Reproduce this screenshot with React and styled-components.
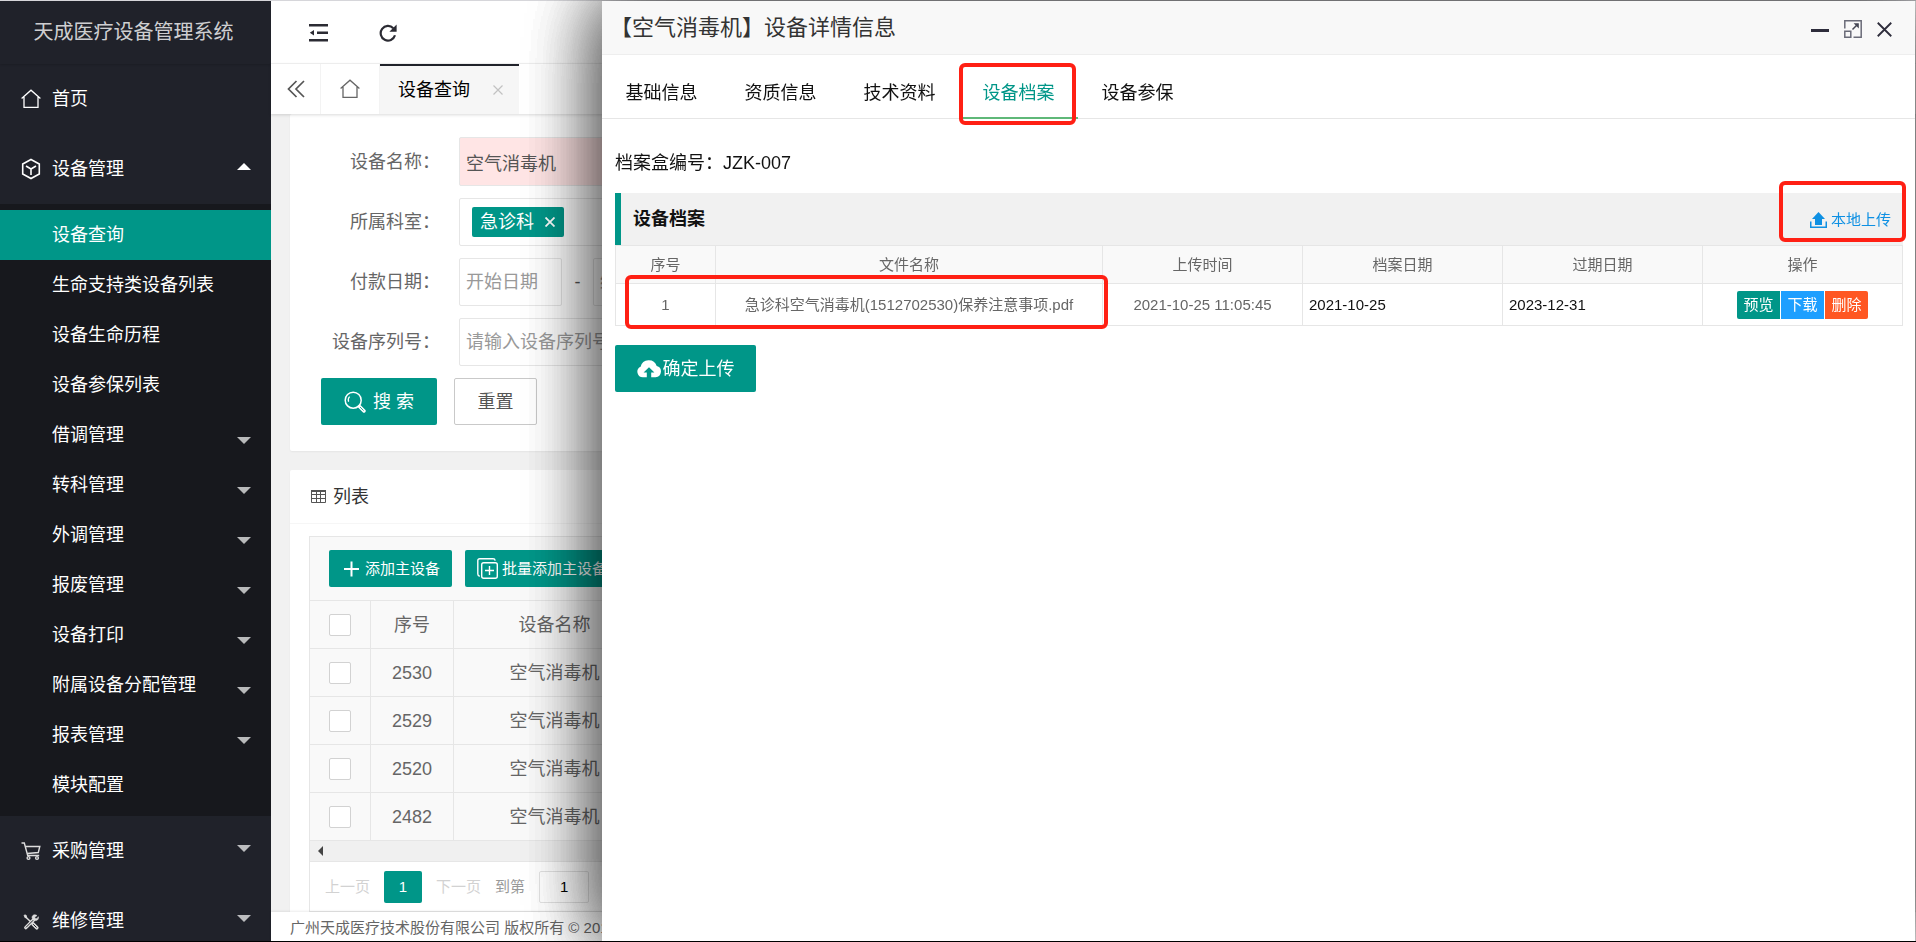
import React from 'react';
import styled, { createGlobalStyle } from 'styled-components';

const GlobalStyle = createGlobalStyle`
  * {
    box-sizing: border-box;
  }

  body {
    margin: 0;
    overflow: hidden;
  }

  body, button, input {
    font-family: "Liberation Sans", "Noto Sans CJK SC", sans-serif;
    font-size: 18px;
    line-height: 24px;
  }

  button {
    margin: 0;
    padding: 0;
    border: 0;
    background: none;
    color: inherit;
    cursor: pointer;
  }

  a {
    color: inherit;
    text-decoration: none;
  }

  svg {
    display: block;
    flex: none;
  }
`;

const Page = styled.div`
  display: flex;
  height: 100vh;
  border-top: 1px solid #d6d6da;
  border-bottom: 1px solid #000;
  background: #f1f1f1;
  overflow: hidden;
`;

/* sidebar */

const Sidebar = styled.aside`
  flex: none;
  width: 271px;
  background: #20222a;
  color: #fff;
  overflow: hidden;
`;

const Brand = styled.h1`
  margin: 0;
  height: 63px;
  padding-right: 4px;
  box-shadow: 0 1px 2px rgba(0, 0, 0, 0.15);
  color: rgba(255, 255, 255, 0.8);
  font-size: 20px;
  font-weight: 400;
  line-height: 63px;
  text-align: center;
`;

const MenuLink = styled.a`
  display: flex;
  align-items: center;
  gap: 11px;
  height: 70px;
  padding: 0 20px 0 21px;
`;

const MenuText = styled.span`
  flex: 1;
`;

const SubMenu = styled.nav`
  padding: 6px 0;
  background: #17181d;
`;

const SubLink = styled.a`
  display: flex;
  align-items: center;
  justify-content: space-between;
  height: 50px;
  padding: 0 20px 0 52px;
  background: ${props => (props.$active ? '#009688' : 'transparent')};
`;

const Caret = styled.span`
  border: 7px solid transparent;
  border-bottom-width: 0;
  border-top-color: rgba(255, 255, 255, 0.7);
  margin-top: ${props => (props.$sub ? '11px' : '0')};
  margin-bottom: ${props => (props.$sub ? '0' : '6px')};
`;

const CaretUp = styled.span`
  border: 7px solid transparent;
  border-top-width: 0;
  border-bottom-color: #fff;
  margin-bottom: 6px;
`;

/* main column */

const Main = styled.div`
  display: flex;
  flex: 1;
  flex-direction: column;
  min-width: 0;
`;

const Header = styled.header`
  display: flex;
  flex: none;
  align-items: center;
  gap: 51px;
  height: 63px;
  padding: 1px 38px 0;
  border-bottom: 1px solid #f3f3f3;
  background: #fff;
`;

const TabBar = styled.div`
  position: relative;
  display: flex;
  flex: none;
  height: 50px;
  background: #fff;
  box-shadow: 0 1px 3px rgba(0, 0, 0, 0.15);
`;

const TabButton = styled.button`
  display: flex;
  align-items: center;
  justify-content: center;
  width: ${props => props.$width};
  border-right: 1px solid #f3f3f3;
`;

const ActiveTab = styled.div`
  display: flex;
  align-items: center;
  gap: 23px;
  padding: 0 16px 0 18px;
  border-top: 2px solid #20222a;
  background: #f6f6f6;
  color: #000;
`;

const Content = styled.main`
  display: flex;
  flex: 1;
  flex-direction: column;
  gap: 19px;
  min-height: 0;
  padding: 0 19px;
  overflow: hidden;
`;

const Card = styled.section`
  flex: none;
  border-radius: 2px;
  background: #fff;
  box-shadow: 0 1px 2px rgba(0, 0, 0, 0.05);
`;

const SearchForm = styled.form`
  display: flex;
  flex-direction: column;
  gap: 12px;
  padding: 23px 19px 26px;
`;

const Field = styled.div`
  display: flex;
  align-items: center;
`;

const Label = styled.label`
  flex: none;
  width: 150px;
  padding-right: 19px;
  color: #666;
  text-align: right;
`;

const TextInput = styled.input`
  width: ${props => props.$width || '237px'};
  height: ${props => (props.$invalid ? '49px' : '48px')};
  padding: 0 6px;
  border: 1px solid #e6e6e6;
  border-radius: 2px;
  background: ${props => (props.$invalid ? '#ffe5e5' : '#fff')};
  color: #555;

  &::placeholder {
    color: #999;
    opacity: 1;
  }
`;

const Dash = styled.span`
  width: 31px;
  color: #555;
  text-align: center;
`;

const TagBox = styled.div`
  display: flex;
  align-items: center;
  width: 237px;
  height: 48px;
  padding: 0 12px;
  border: 1px solid #e6e6e6;
  border-radius: 2px;
`;

const Tag = styled.span`
  display: flex;
  align-items: center;
  gap: 11px;
  height: 30px;
  padding: 0 9px 0 8px;
  border-radius: 2px;
  background: #009688;
  color: #fff;
`;

const FormActions = styled.div`
  display: flex;
  gap: 17px;
  padding-left: 12px;
`;

const PrimaryButton = styled.button`
  display: flex;
  align-items: center;
  justify-content: center;
  gap: ${props => props.$gap || '7px'};
  width: ${props => props.$width};
  height: 47px;
  border-radius: 2px;
  background: #009688;
  color: #fff;
`;

const ResetButton = styled.button`
  width: 83px;
  height: 47px;
  border: 1px solid #c9c9c9;
  border-radius: 2px;
  color: #555;
`;

const CardTitle = styled.h2`
  display: flex;
  align-items: center;
  gap: 7px;
  margin: 0;
  height: 54px;
  padding: 0 21px;
  border-bottom: 1px solid #f6f6f6;
  color: #333;
  font-size: 18px;
  font-weight: 400;
`;

const ListBox = styled.div`
  margin: 12px 19px;
  border: 1px solid #e6e6e6;
`;

const Toolbar = styled.div`
  display: flex;
  gap: 13px;
  padding: 13px 19px;
  background: #f9f9f9;
`;

const ToolButton = styled.button`
  display: flex;
  align-items: center;
  gap: 4px;
  height: 37px;
  padding: 0 12px;
  border-radius: 2px;
  background: #009688;
  color: #fff;
  font-size: 15px;
`;

const ListTable = styled.table`
  width: 100%;
  border-collapse: separate;
  border-spacing: 0;
  table-layout: fixed;
  background: #f9f9f9;
  color: #666;

  th, td {
    height: 48px;
    padding: 0;
    border: 1px solid #e6e6e6;
    border-left: 0;
    border-bottom: 0;
    font-weight: 400;
    text-align: center;
  }
`;

const CheckBox = styled.input`
  display: block;
  width: 22px;
  height: 22px;
  margin: 0 auto;
  border: 1px solid #d2d2d2;
  border-radius: 2px;
  background: #fff;
  appearance: none;
`;

const ScrollTrack = styled.div`
  display: flex;
  align-items: center;
  height: 21px;
  padding-left: 8px;
  border-top: 1px solid #e6e6e6;
  background: #f0f0f0;
`;

const ScrollArrow = styled.span`
  border: 5px solid transparent;
  border-right-color: #444;
  border-left-width: 0;
`;

const Pager = styled.div`
  display: flex;
  align-items: center;
  gap: 14px;
  height: 50px;
  padding-left: 15px;
  border-top: 1px solid #e6e6e6;
  background: #fff;
  color: #999;
  font-size: 15px;
`;

const PageStep = styled.button`
  color: #d2d2d2;
  font-size: 15px;
`;

const PageCurrent = styled.button`
  width: 38px;
  height: 32px;
  border-radius: 2px;
  background: #009688;
  color: #fff;
  font-size: 15px;
`;

const PageInput = styled.input`
  width: 50px;
  height: 32px;
  border: 1px solid #e2e2e2;
  border-radius: 2px;
  font-size: 15px;
  text-align: center;
`;

const Footer = styled.footer`
  position: relative;
  flex: none;
  height: 29px;
  padding: 0 19px;
  background: #fff;
  box-shadow: 0 -1px 2px rgba(0, 0, 0, 0.08);
  color: #666;
  font-size: 15px;
  line-height: 32px;
`;

/* detail window, floats over the page */

const Dialog = styled.div`
  position: fixed;
  top: 1px;
  right: 1px;
  bottom: 1px;
  left: 602px;
  background: #fff;
  box-shadow:
    0 0 72px rgba(0, 0, 0, 0.3),
    0 0 72px rgba(0, 0, 0, 0.3),
    0 0 72px rgba(0, 0, 0, 0.3),
    0 0 72px rgba(0, 0, 0, 0.3);
  color: #111;
`;

const DialogHeader = styled.header`
  display: flex;
  align-items: center;
  justify-content: space-between;
  height: 54px;
  padding: 0 23px 0 8px;
  border-bottom: 1px solid #eee;
  background: #f8f8f8;
`;

const DialogTitle = styled.h2`
  margin: 0;
  color: #333;
  font-size: 22px;
  font-weight: 400;
  line-height: 30px;
`;

const WindowButtons = styled.div`
  display: flex;
  align-items: center;
  gap: 15px;
  padding-top: 3px;
`;

const DialogTabs = styled.div`
  display: flex;
  height: 64px;
  border-bottom: 1px solid #e6e6e6;
`;

const DialogTab = styled.button`
  position: relative;
  width: 119px;
  height: 64px;
  padding-top: 14px;
  border-bottom: 2px solid ${props => (props.$active ? '#5fb878' : 'transparent')};
  color: ${props => (props.$active ? '#009688' : '#111')};
`;

const Mark = styled.span`
  position: absolute;
  top: ${props => props.$top};
  right: ${props => props.$right};
  bottom: ${props => props.$bottom};
  left: ${props => props.$left};
  border: 4px solid #ff2014;
  border-radius: 6px;
  pointer-events: none;
`;

const DialogBody = styled.div`
  padding: 32px 12px 32px 13px;
`;

const BoxNumber = styled.p`
  margin: 0 0 18px;
`;

const SectionBar = styled.div`
  position: relative;
  display: flex;
  align-items: center;
  justify-content: space-between;
  height: 52px;
  padding: 0 12px;
  border-left: 6px solid #009688;
  background: #f1f1f1;
`;

const SectionTitle = styled.h3`
  margin: 0;
  font-size: 18px;
  font-weight: 700;
`;

const UploadButton = styled.button`
  display: flex;
  align-items: center;
  gap: 4px;
  padding-top: 2px;
  color: #0e90e3;
  font-size: 15px;
`;

const FileTableWrap = styled.div`
  position: relative;
  margin-bottom: 19px;
`;

const FileTable = styled.table`
  width: 100%;
  border-collapse: collapse;
  table-layout: fixed;
  color: #666;
  font-size: 15px;

  th, td {
    padding: 0 6px;
    border: 1px solid #e6e6e6;
    font-weight: 400;
    text-align: center;
  }

  th {
    height: 38px;
    background: #f9f9f9;
  }

  td {
    height: 42px;
  }
`;

const DateCell = styled.td`
  && {
    color: #111;
    text-align: left;
  }
`;

const RowActions = styled.div`
  display: flex;
  justify-content: center;
  gap: 1px;
`;

const RowButton = styled.button`
  width: 43px;
  height: 28px;
  border-radius: ${props => props.$radius || '0'};
  background: ${props => props.$color};
  color: #fff;
  font-size: 15px;
`;

/* icons */

const HomeIcon = ({ color }) => (
  <svg width="20" height="20" viewBox="0 0 20 20" fill="none" stroke={color} strokeWidth="1.3">
    <path d="M0.6 9.6 10 1.2l9.4 8.4M3 8v10.3h14V8" />
  </svg>
);

const CubeIcon = () => (
  <svg width="20" height="22" viewBox="0 0 20 22" fill="none" stroke="#fff" strokeWidth="1.6">
    <path d="M10 1.5 18.3 6v10L10 20.5 1.7 16V6zM5 8l5 3 5-3M10 11v6" />
  </svg>
);

const CartIcon = () => (
  <svg width="20" height="20" viewBox="0 0 20 20" fill="none" stroke="#ddd" strokeWidth="1.4">
    <path d="M0.5 2h2.8l3.4 12.5h11.5M4.5 5.5h14.3l-1.5 6-11 1" />
    <circle cx="7.5" cy="17" r="1.4" />
    <circle cx="16" cy="17" r="1.4" />
  </svg>
);

const ToolsIcon = () => (
  <svg width="20" height="20" viewBox="0 0 20 20" fill="none" stroke="#ddd">
    <path d="M4 5.5 10 11" strokeWidth="1.6" />
    <path d="m3 4.2 2-.2.8 2.5-1.7.2z" fill="#ddd" strokeWidth="0.8" />
    <path d="m12 13 3.8 3.8" strokeWidth="3.6" strokeLinecap="round" />
    <path d="m12.2 13.2 3.4 3.4" stroke="#20222a" strokeWidth="1" />
    <path d="m4.8 16.6 7.6-7.6" strokeWidth="3.4" strokeLinecap="round" />
    <path d="m5 16.4 7.2-7.2" stroke="#20222a" strokeWidth="1" />
    <path d="M16 4.6 13.7 6l.5 1.4 1.9.3 1.2-2c.7 2.6-1.3 4.6-4.2 3.7l-2-2.2c-.5-2.5 2-4.6 4.9-2.6z" fill="#ddd" strokeWidth="0.6" />
  </svg>
);

const CollapseIcon = () => (
  <svg width="19" height="18" viewBox="0 0 19 18" fill="#2b2b33">
    <path d="M0 0h19v2.4H0zM8 7.6h11V10H8zM0 15h19v2.4H0zM.8 8.8 5 6v5.6z" />
  </svg>
);

const RefreshIcon = () => (
  <svg width="18" height="18" viewBox="0 0 18 18">
    <path d="M14.3 4.2A7.3 7.3 0 1 0 16 11.3" fill="none" stroke="#2b2b33" strokeWidth="2.2" />
    <path d="M17.6 0.6v7.2h-7.2z" fill="#2b2b33" />
  </svg>
);

const DoubleLeftIcon = () => (
  <svg width="18" height="18" viewBox="0 0 18 18" fill="none" stroke="#555" strokeWidth="1.7">
    <path d="M9.5 1 1.5 9l8 8M17 1 9 9l8 8" />
  </svg>
);

const CrossIcon = ({ size, color, weight }) => (
  <svg width={size} height={size} viewBox="0 0 10 10" stroke={color} strokeWidth={weight}>
    <path d="m.5.5 9 9M9.5.5l-9 9" />
  </svg>
);

const SearchIcon = () => (
  <svg width="22" height="22" viewBox="0 0 22 22" fill="none" stroke="#fff">
    <circle cx="9.2" cy="9.2" r="8" strokeWidth="1.5" />
    <path d="M4.6 10.8a5 5 0 0 1 1-5.2" strokeWidth="1.2" />
    <path d="m15.5 15.5 4.5 4.5" strokeWidth="3.4" strokeLinecap="round" />
    <path d="m16 16 3.6 3.6" stroke="#009688" strokeWidth="0.8" />
  </svg>
);

const GridIcon = () => (
  <svg width="15" height="13" viewBox="0 0 15 13" fill="none" stroke="#555">
    <path d="M.5.5h14v12H.5zM.5 4.5h14M.5 8.5h14M5.5 1v11M9.5 1v11" />
    <path d="M0 1h15" strokeWidth="2" />
  </svg>
);

const PlusIcon = () => (
  <svg width="20" height="18" viewBox="0 0 20 18" stroke="#fff" strokeWidth="2">
    <path d="M3 9h15M10.5 1.5v15" />
  </svg>
);

const CopyPlusIcon = () => (
  <svg width="21" height="21" viewBox="0 0 21 21" fill="none" stroke="#fff" strokeWidth="1.4">
    <rect x="4.7" y="4.7" width="15.6" height="15.6" rx="2" />
    <path d="M2.8 18.2C1.5 18 .8 17.4.8 16V2.8c0-1.3.7-2 2-2H16c1.3 0 2 .6 2.2 1.8M12.5 8v9M8 12.5h9" />
  </svg>
);

const UploadIcon = () => (
  <svg width="17" height="16" viewBox="0 0 17 16" fill="#0e90e3">
    <path d="M8.5 0 15 7h-3v6H5V7H2z" />
    <path d="M0 9.5h1.5v5h14v-5H17V16H0z" />
  </svg>
);

const CloudUploadIcon = () => (
  <svg width="24" height="18" viewBox="0 0 24 18" fill="#fff">
    <path d="M6 17.2a5.5 5.5 0 0 1-2.4-10.5A8.4 8.4 0 0 1 19.7 6 5.7 5.7 0 0 1 18.6 17.2H14.2v-4.6h3.2L12 7.2l-5.4 5.4h3.2v4.6z" />
  </svg>
);

const MaximizeIcon = () => (
  <svg width="18" height="18" viewBox="0 0 18 18" fill="none" stroke="#6a6b78" strokeWidth="1.5">
    <path d="M.8 8.5V.8h16.4v16.4H9.5" />
    <path d="M.8 11.2h6v6h-6z" />
    <path d="m8.5 9.5 5.2-5.2" stroke="#444653" />
    <path d="M9.6 3.2h5.2v5.2z" fill="#444653" stroke="none" />
  </svg>
);

const MinimizeIcon = () => (
  <svg width="18" height="18" viewBox="0 0 18 18">
    <path d="M0 9h18v3H0z" fill="#2e2d3c" />
  </svg>
);

const subMenu = [
  { text: '设备查询', active: true },
  { text: '生命支持类设备列表' },
  { text: '设备生命历程' },
  { text: '设备参保列表' },
  { text: '借调管理', more: true },
  { text: '转科管理', more: true },
  { text: '外调管理', more: true },
  { text: '报废管理', more: true },
  { text: '设备打印', more: true },
  { text: '附属设备分配管理', more: true },
  { text: '报表管理', more: true },
  { text: '模块配置' },
];

const rows = ['2530', '2529', '2520', '2482'];

const dialogTabs = ['基础信息', '资质信息', '技术资料', '设备档案', '设备参保'];

const SideMenu = () => (
  <Sidebar>
    <Brand>天成医疗设备管理系统</Brand>
    <MenuLink href="#home">
      <HomeIcon color="#fff" />
      <MenuText>首页</MenuText>
    </MenuLink>
    <MenuLink href="#device">
      <CubeIcon />
      <MenuText>设备管理</MenuText>
      <CaretUp />
    </MenuLink>
    <SubMenu>
      {subMenu.map(item => (
        <SubLink key={item.text} href="#device" $active={item.active}>
          {item.text}
          {item.more && <Caret $sub />}
        </SubLink>
      ))}
    </SubMenu>
    <MenuLink href="#purchase">
      <CartIcon />
      <MenuText>采购管理</MenuText>
      <Caret />
    </MenuLink>
    <MenuLink href="#repair">
      <ToolsIcon />
      <MenuText>维修管理</MenuText>
      <Caret />
    </MenuLink>
  </Sidebar>
);

const DeviceSearch = () => (
  <Card>
    <SearchForm onSubmit={e => e.preventDefault()}>
      <Field>
        <Label htmlFor="name">设备名称：</Label>
        <TextInput id="name" defaultValue="空气消毒机" $invalid />
      </Field>
      <Field>
        <Label as="span">所属科室：</Label>
        <TagBox>
          <Tag>
            急诊科
            <button type="button" aria-label="移除">
              <CrossIcon size={10} color="#fff" weight={1.8} />
            </button>
          </Tag>
        </TagBox>
      </Field>
      <Field>
        <Label htmlFor="start">付款日期：</Label>
        <TextInput id="start" placeholder="开始日期" $width="103px" />
        <Dash>-</Dash>
        <TextInput aria-label="结束日期" placeholder="结束日期" $width="103px" />
      </Field>
      <Field>
        <Label htmlFor="serial">设备序列号：</Label>
        <TextInput id="serial" placeholder="请输入设备序列号" />
      </Field>
      <FormActions>
        <PrimaryButton type="submit" $width="116px">
          <SearchIcon />
          搜 索
        </PrimaryButton>
        <ResetButton type="reset">重置</ResetButton>
      </FormActions>
    </SearchForm>
  </Card>
);

const DeviceList = () => (
  <Card>
    <CardTitle>
      <GridIcon />
      列表
    </CardTitle>
    <ListBox>
      <Toolbar>
        <ToolButton>
          <PlusIcon />
          添加主设备
        </ToolButton>
        <ToolButton>
          <CopyPlusIcon />
          批量添加主设备
        </ToolButton>
      </Toolbar>
      <ListTable>
        <colgroup>
          <col width="61" />
          <col width="83" />
          <col width="202" />
          <col />
        </colgroup>
        <thead>
          <tr>
            <th><CheckBox type="checkbox" aria-label="全选" /></th>
            <th>序号</th>
            <th>设备名称</th>
            <th />
          </tr>
        </thead>
        <tbody>
          {rows.map(id => (
            <tr key={id}>
              <td><CheckBox type="checkbox" aria-label={id} /></td>
              <td>{id}</td>
              <td>空气消毒机</td>
              <td />
            </tr>
          ))}
        </tbody>
      </ListTable>
      <ScrollTrack>
        <ScrollArrow />
      </ScrollTrack>
      <Pager>
        <PageStep>上一页</PageStep>
        <PageCurrent>1</PageCurrent>
        <PageStep>下一页</PageStep>
        <label htmlFor="page">到第</label>
        <PageInput id="page" defaultValue="1" />
        页
      </Pager>
    </ListBox>
  </Card>
);

const DeviceDialog = () => (
  <Dialog role="dialog">
    <DialogHeader>
      <DialogTitle>【空气消毒机】设备详情信息</DialogTitle>
      <WindowButtons>
        <button aria-label="最小化"><MinimizeIcon /></button>
        <button aria-label="最大化"><MaximizeIcon /></button>
        <button aria-label="关闭"><CrossIcon size={15} color="#2e2d3c" weight={1.2} /></button>
      </WindowButtons>
    </DialogHeader>
    <DialogTabs>
      {dialogTabs.map(text => (
        <DialogTab key={text} $active={text === '设备档案'}>
          {text}
          {text === '设备档案' && <Mark $top="8px" $right="2px" $bottom="-8px" $left="0" />}
        </DialogTab>
      ))}
    </DialogTabs>
    <DialogBody>
      <BoxNumber>档案盒编号：JZK-007</BoxNumber>
      <SectionBar>
        <SectionTitle>设备档案</SectionTitle>
        <UploadButton>
          <UploadIcon />
          本地上传
        </UploadButton>
        <Mark $top="-12px" $right="-3px" $bottom="3px" $left="calc(100% - 124px)" />
      </SectionBar>
      <FileTableWrap>
        <FileTable>
          <colgroup>
            <col width="100" />
            <col />
            <col width="200" />
            <col width="200" />
            <col width="200" />
            <col width="200" />
          </colgroup>
          <thead>
            <tr>
              <th>序号</th>
              <th>文件名称</th>
              <th>上传时间</th>
              <th>档案日期</th>
              <th>过期日期</th>
              <th>操作</th>
            </tr>
          </thead>
          <tbody>
            <tr>
              <td>1</td>
              <td>急诊科空气消毒机(1512702530)保养注意事项.pdf</td>
              <td>2021-10-25 11:05:45</td>
              <DateCell>2021-10-25</DateCell>
              <DateCell>2023-12-31</DateCell>
              <td>
                <RowActions>
                  <RowButton $color="#009688" $radius="2px 0 0 2px">预览</RowButton>
                  <RowButton $color="#1e9fff">下载</RowButton>
                  <RowButton $color="#ff5722" $radius="0 2px 2px 0">删除</RowButton>
                </RowActions>
              </td>
            </tr>
          </tbody>
        </FileTable>
        <Mark $top="30px" $right="795px" $bottom="-3px" $left="10px" />
      </FileTableWrap>
      <PrimaryButton $width="141px" $gap="2px">
        <CloudUploadIcon />
        确定上传
      </PrimaryButton>
    </DialogBody>
  </Dialog>
);

const App = () => (
  <>
    <GlobalStyle />
    <Page>
      <SideMenu />
      <Main>
        <Header>
          <button aria-label="收起菜单"><CollapseIcon /></button>
          <button aria-label="刷新"><RefreshIcon /></button>
        </Header>
        <TabBar>
          <TabButton $width="50px" aria-label="向左"><DoubleLeftIcon /></TabButton>
          <TabButton $width="59px" aria-label="首页"><HomeIcon color="#666" /></TabButton>
          <ActiveTab>
            设备查询
            <button aria-label="关闭标签"><CrossIcon size={10} color="#c2c2c2" weight={1.2} /></button>
          </ActiveTab>
        </TabBar>
        <Content>
          <DeviceSearch />
          <DeviceList />
        </Content>
        <Footer>广州天成医疗技术股份有限公司 版权所有 © 2019</Footer>
      </Main>
    </Page>
    <DeviceDialog />
  </>
);

export default App;
